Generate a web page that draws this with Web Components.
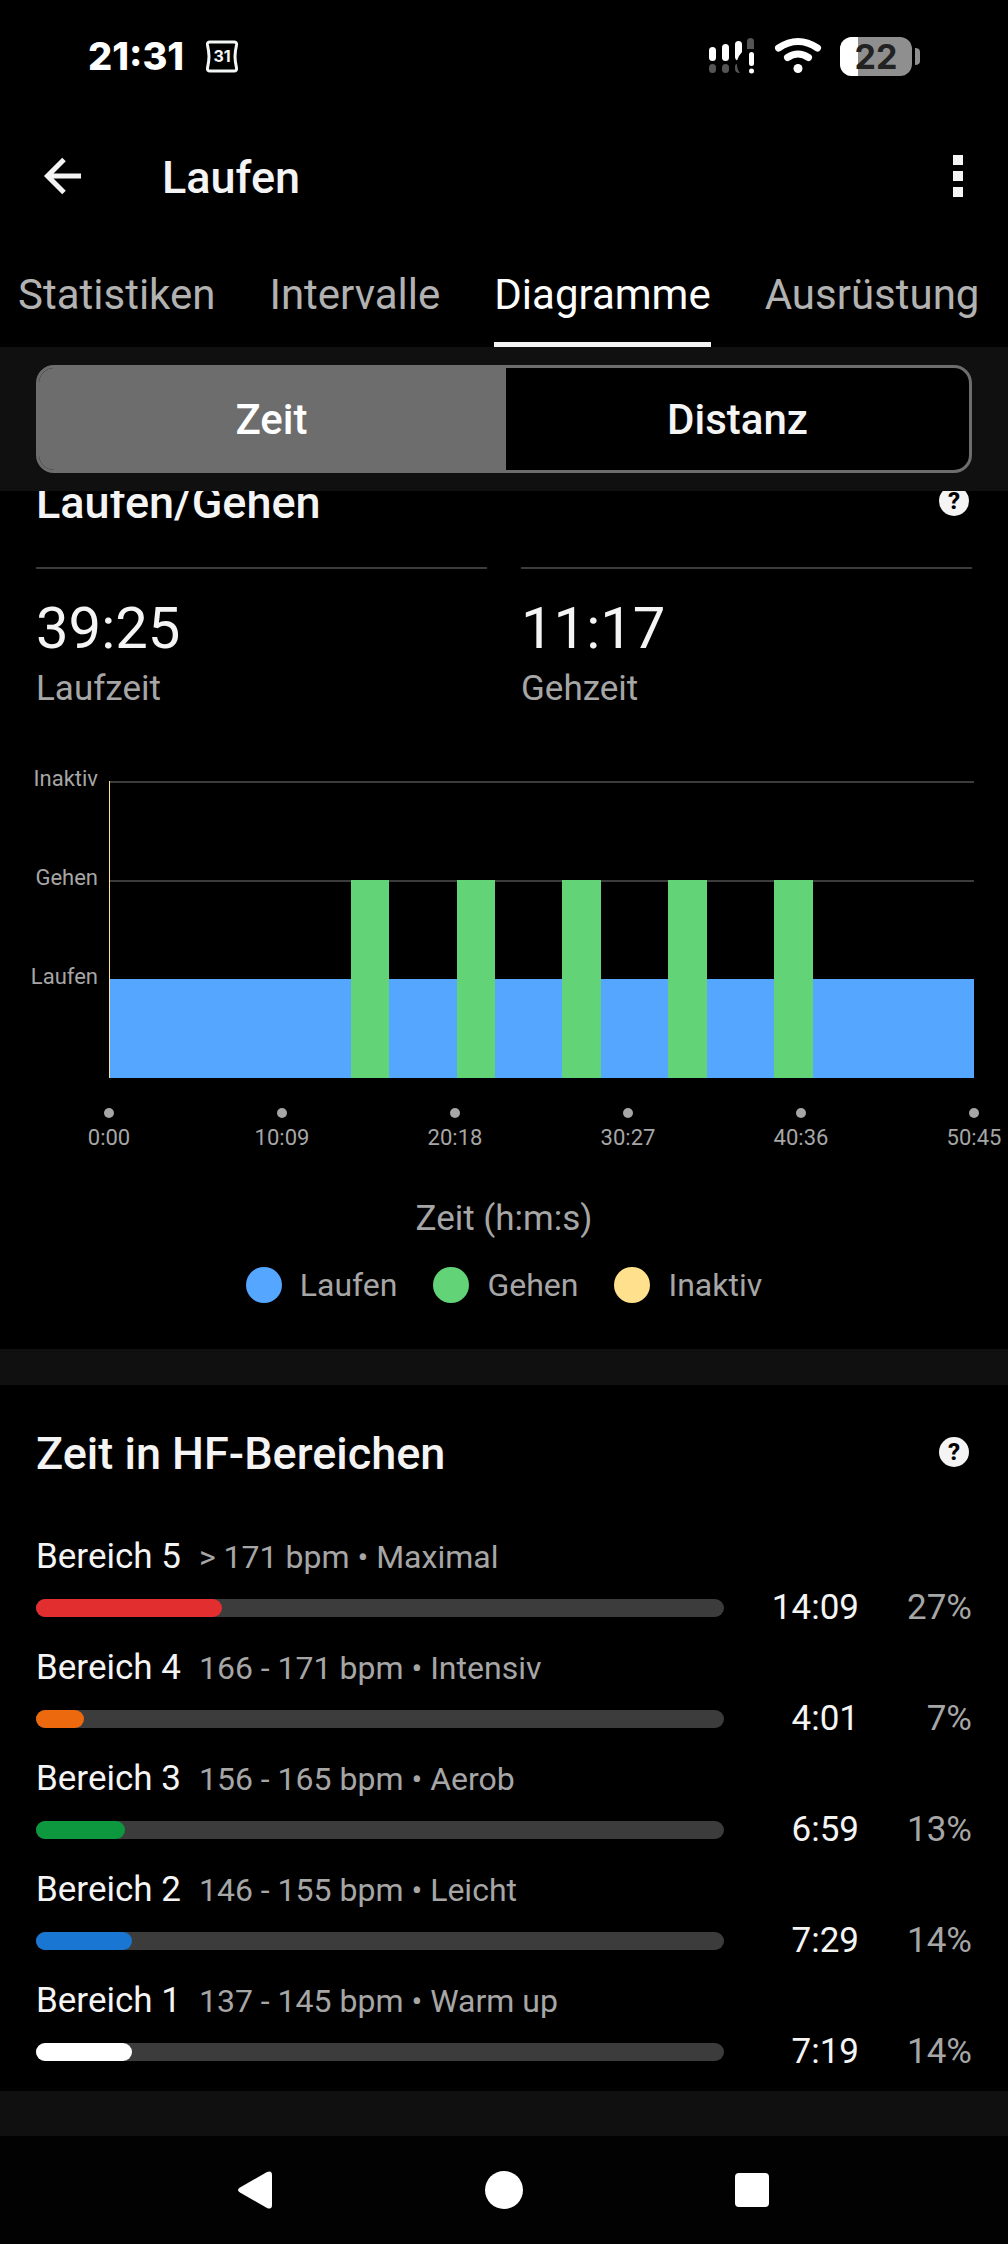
<!DOCTYPE html>
<html lang="de">
<head>
<meta charset="utf-8">
<meta name="viewport" content="width=device-width, initial-scale=1">
<title>Laufen</title>
<style>
  :root {
    --text: #f4f4f4;
    --muted: #a6a6a6;
    --line: #3c3c3c;
    --surface: #101010;
    --run: #54a6ff;
    --walk: #62d477;
    --idle: #ffe08c;
  }
  body {
    margin: 0;
    min-height: 100vh;
    display: flex;
    flex-direction: column;
    background: var(--surface);
    color: var(--text);
    font-family: Roboto, "Liberation Sans", sans-serif;
  }
  main {
    flex: 1;
    overflow: hidden;
    display: flex;
    flex-direction: column;
    gap: 36px;
  }
  /* the page is scrolled a little, so the first card starts under the switch */
  main metric-card:first-child {
    margin-top: -57px;
  }
  .stats {
    display: grid;
    grid-template-columns: 1fr 1fr;
    gap: 34px;
    padding: 0 36px;
  }
  .zones {
    padding: 16px 36px 2px;
  }
</style>
</head>
<body>
  <status-bar time="21:31" day="31" battery="22"></status-bar>
  <app-header>Laufen</app-header>
  <tab-bar>
    <tab-item>Statistiken</tab-item>
    <tab-item>Intervalle</tab-item>
    <tab-item active>Diagramme</tab-item>
    <tab-item>Ausrüstung</tab-item>
  </tab-bar>
  <segment-switch first="Zeit" second="Distanz"></segment-switch>
  <main>
    <metric-card>
      <span slot="title">Laufen/Gehen</span>
      <div class="stats">
        <stat-value label="Laufzeit">39:25</stat-value>
        <stat-value label="Gehzeit">11:17</stat-value>
      </div>
      <activity-chart></activity-chart>
    </metric-card>
    <metric-card>
      <span slot="title">Zeit in HF-Bereichen</span>
      <div class="zones">
        <zone-row name="Bereich 5" range="&gt; 171 bpm • Maximal" time="14:09" percent="27" color="#e22e2f"></zone-row>
        <zone-row name="Bereich 4" range="166 - 171 bpm • Intensiv" time="4:01" percent="7" color="#ec690d"></zone-row>
        <zone-row name="Bereich 3" range="156 - 165 bpm • Aerob" time="6:59" percent="13" color="#0d983f"></zone-row>
        <zone-row name="Bereich 2" range="146 - 155 bpm • Leicht" time="7:29" percent="14" color="#1976d2"></zone-row>
        <zone-row name="Bereich 1" range="137 - 145 bpm • Warm up" time="7:19" percent="14" color="#ffffff"></zone-row>
      </div>
    </metric-card>
  </main>
  <nav-bar></nav-bar>

<script>
const BUTTON_RESET = /* css */ `
  button {
    margin: 0;
    padding: 0;
    border: 0;
    background: none;
    color: inherit;
    font: inherit;
    cursor: pointer;
  }
  svg { display: block; }
`;

class StatusBar extends HTMLElement {
  connectedCallback () {
    const battery = this.getAttribute('battery');
    this.attachShadow({ mode: 'open' }).innerHTML = /* html */ `
      <style>
        :host {
          display: flex;
          align-items: center;
          height: 112px;
          padding: 0 88px;
          background: #000;
          color: #fff;
          font-family: Inter, Roboto, sans-serif;
        }
        svg { display: block; }
        .time {
          font-size: 38px;
          font-weight: 800;
          line-height: 48px;
        }
        .calendar { margin-left: 20px; }
        .icons {
          display: flex;
          align-items: center;
          gap: 18px;
          margin-left: auto;
        }
      </style>
      <span class="time">${this.getAttribute('time')}</span>
      <svg class="calendar" width="36" height="36" viewBox="0 0 36 36" aria-hidden="true">
        <path d="M6 4H30Q33 4 32.500 7Q31 14 31 18.500T32.500 30Q33 33 30 33H6Q3 33 3.500 30Q5 23 5 18.500T3.500 7Q3 4 6 4Z" fill="none" stroke="#f4f7f7" stroke-width="3"/>
        <text x="18" y="24" text-anchor="middle" font-size="16" font-weight="700" fill="#f4f7f7">${this.getAttribute('day')}</text>
      </svg>
      <div class="icons">
        <svg width="48" height="40" viewBox="0 0 48 40" aria-hidden="true">
          <g fill="#fff">
            <rect x="1" y="11" width="7" height="14" rx="3.500"/>
            <rect x="14" y="8" width="7" height="17" rx="3.500"/>
            <path d="M27 8.500a3.500 3.500 0 0 1 7 0V16Q31 19 29 24.500Q27 24 27 21Z"/>
            <rect x="41" y="16" width="5" height="14" rx="2.500"/>
            <circle cx="43.500" cy="35" r="2.500"/>
          </g>
          <g fill="#555">
            <rect x="1" y="28" width="7" height="9" rx="3.500"/>
            <rect x="14" y="28" width="7" height="9" rx="3.500"/>
            <path d="M27 31Q27 28 29 28Q29 34 32 37Q27 37 27 33Z"/>
            <path d="M39 13V5.500a3.500 3.500 0 0 1 7 0V13Z"/>
          </g>
        </svg>
        <svg width="48" height="40" viewBox="0 0 48 40" fill="none" stroke="#fff" stroke-width="7" stroke-linecap="round" aria-hidden="true">
          <path d="M4.500 12Q24 -1 43.500 12"/>
          <path d="M13.500 21.500Q24 14.500 34.500 21.500"/>
          <circle cx="24" cy="32.500" r="4.500" fill="#fff" stroke="none"/>
        </svg>
        <svg width="80" height="40" viewBox="0 0 80 40" role="img" aria-label="Akku ${battery} %">
          <clipPath id="body"><rect y="1" width="72" height="39" rx="12"/></clipPath>
          <g clip-path="url(#body)">
            <rect width="72" height="40" fill="#8f8f8f"/>
            <rect width="18" height="40" fill="#fff"/>
          </g>
          <path d="M75 12Q80 12 80 16V25Q80 29 75 29Z" fill="#8f8f8f"/>
          <text x="36" y="33" text-anchor="middle" font-size="34" font-weight="700" fill="#222">${battery}</text>
        </svg>
      </div>
    `;
  }
}

class AppHeader extends HTMLElement {
  connectedCallback () {
    this.attachShadow({ mode: 'open' }).innerHTML = /* html */ `
      <style>
        ${BUTTON_RESET}
        :host {
          display: flex;
          align-items: center;
          height: 128px;
          padding: 0 36px;
          background: #000;
        }
        h1 {
          flex: 1;
          margin: 0 0 0 72px;
          padding-top: 4px;
          font-size: 45px;
          font-weight: 500;
          line-height: 56px;
        }
      </style>
      <button aria-label="Zurück">
        <svg width="54" height="54" viewBox="0 0 54 54" fill="none" stroke="currentColor" stroke-width="5">
          <path d="M45 27H12M28 10.500L11.500 27L28 43.500"/>
        </svg>
      </button>
      <h1><slot></slot></h1>
      <button aria-label="Weitere Optionen">
        <svg width="28" height="54" viewBox="0 0 28 54" fill="currentColor">
          <path d="M9 6h10v10H9zM9 22h10v10H9zM9 38h10v10H9z"/>
        </svg>
      </button>
    `;
  }
}

class TabBar extends HTMLElement {
  connectedCallback () {
    this.attachShadow({ mode: 'open' }).innerHTML = /* html */ `
      <style>
        :host {
          display: flex;
          gap: 54px;
          height: 107px;
          padding: 0 18px;
          overflow: hidden;
          background: #000;
        }
      </style>
      <slot></slot>
    `;
    this.setAttribute('role', 'tablist');
  }
}

class TabItem extends HTMLElement {
  connectedCallback () {
    const active = this.hasAttribute('active');
    this.attachShadow({ mode: 'open' }).innerHTML = /* html */ `
      <style>
        ${BUTTON_RESET}
        :host {
          display: flex;
          flex: none;
        }
        button {
          padding-top: 8px;
          border-bottom: 5px solid transparent;
          color: #b2b2b2;
          font-size: 42px;
          line-height: 94px;
        }
        :host([active]) button {
          border-color: var(--text);
          color: #fff;
        }
      </style>
      <button role="tab" aria-selected="${active}"><slot></slot></button>
    `;
  }
}

class SegmentSwitch extends HTMLElement {
  connectedCallback () {
    this.attachShadow({ mode: 'open' }).innerHTML = /* html */ `
      <style>
        ${BUTTON_RESET}
        :host {
          display: block;
          padding: 18px 36px;
          background: var(--surface);
        }
        .switch {
          display: grid;
          grid-template-columns: 1fr 1fr;
          border: 3px solid #6d6d6d;
          border-radius: 18px;
          overflow: hidden;
          background: #000;
        }
        button {
          padding-top: 2px;
          font-size: 42px;
          font-weight: 500;
          line-height: 100px;
        }
        button + button {
          border-left: 2px solid #6d6d6d;
        }
        button[aria-pressed="true"] {
          background: #6d6d6d;
          color: #fff;
        }
      </style>
      <div class="switch">
        <button aria-pressed="true">${this.getAttribute('first')}</button>
        <button aria-pressed="false">${this.getAttribute('second')}</button>
      </div>
    `;
    const buttons = this.shadowRoot.querySelectorAll('button');
    buttons.forEach(button => button.addEventListener('click', () => {
      buttons.forEach(other => other.setAttribute('aria-pressed', other === button));
    }));
  }
}

class MetricCard extends HTMLElement {
  connectedCallback () {
    this.attachShadow({ mode: 'open' }).innerHTML = /* html */ `
      <style>
        ${BUTTON_RESET}
        :host {
          display: block;
          background: #000;
        }
        header {
          display: flex;
          align-items: center;
          justify-content: space-between;
          padding: 33px 39px 32px 36px;
        }
        h2 {
          margin: 0;
          padding-top: 4px;
          font-size: 45px;
          font-weight: 500;
          line-height: 64px;
        }
        button {
          width: 30px;
          height: 30px;
          border-radius: 50%;
          background: var(--text);
          color: #000;
          font-size: 24px;
          font-weight: 800;
          line-height: 30px;
        }
      </style>
      <header>
        <h2><slot name="title"></slot></h2>
        <button aria-label="Hilfe">?</button>
      </header>
      <slot></slot>
    `;
  }
}

class StatValue extends HTMLElement {
  connectedCallback () {
    this.attachShadow({ mode: 'open' }).innerHTML = /* html */ `
      <style>
        :host {
          display: flex;
          flex-direction: column;
          padding-top: 24px;
          border-top: 2px solid var(--line);
        }
        .value {
          font-size: 58px;
          line-height: 70px;
        }
        .label {
          color: var(--muted);
          font-size: 35px;
          line-height: 52px;
        }
      </style>
      <span class="value"><slot></slot></span>
      <span class="label">${this.getAttribute('label')}</span>
    `;
  }
}

// [kind, duration in seconds]
const SEGMENTS = [
  ['idle', 3], ['run', 847], ['walk', 137], ['run', 236], ['walk', 137],
  ['run', 235], ['walk', 137], ['run', 237], ['walk', 135], ['run', 238],
  ['walk', 137], ['run', 566],
];
const LEVELS = ['Inaktiv', 'Gehen', 'Laufen'];
const TICKS = ['0:00', '10:09', '20:18', '30:27', '40:36', '50:45'];
const LEGEND = [['run', 'Laufen'], ['walk', 'Gehen'], ['idle', 'Inaktiv']];

class ActivityChart extends HTMLElement {
  connectedCallback () {
    this.attachShadow({ mode: 'open' }).innerHTML = /* html */ `
      <style>
        :host {
          display: block;
          padding: 66px 34px 44px 0;
          color: var(--muted);
        }
        .plot {
          display: grid;
          grid-template-columns: 98px 1fr;
          column-gap: 11px;
        }
        .levels, .lines {
          display: grid;
          grid-auto-rows: 99px;
        }
        .levels {
          margin-top: -16px;
          text-align: right;
          font-size: 22px;
          line-height: 28px;
        }
        /* grid lines and bars share one cell */
        .area { display: grid; }
        .lines, .bars { grid-area: 1 / 1; }
        .lines div { border-top: 2px solid var(--line); }
        .bars {
          display: flex;
          align-items: flex-end;
          height: 297px;
        }
        .run { height: 33.33%; background: var(--run); }
        .walk { height: 66.66%; background: var(--walk); }
        .idle { height: 100%; min-width: 1px; background: var(--idle); }
        .ticks {
          display: flex;
          justify-content: space-between;
          margin: 30px 0 0 109px;
          font-size: 22px;
          line-height: 32px;
        }
        .ticks div {
          display: flex;
          flex-direction: column;
          align-items: center;
          gap: 4px;
          width: 0;
          white-space: nowrap;
        }
        .ticks div::before {
          content: "";
          width: 10px;
          height: 10px;
          border-radius: 50%;
          background: var(--muted);
        }
        .unit {
          margin: 39px 0 0 34px;
          text-align: center;
          font-size: 35px;
          line-height: 52px;
        }
        .legend {
          display: flex;
          justify-content: center;
          gap: 36px;
          margin: 20px 0 0 34px;
          font-size: 32px;
          line-height: 40px;
        }
        .legend span {
          display: flex;
          align-items: center;
          gap: 18px;
        }
        .legend i {
          width: 36px;
          height: 36px;
          border-radius: 50%;
        }
      </style>
      <div class="plot">
        <div class="levels">${LEVELS.map(level => `<div>${level}</div>`).join('')}</div>
        <div class="area">
          <div class="lines">${LEVELS.map(() => '<div></div>').join('')}</div>
          <div class="bars">${SEGMENTS.map(([kind, time]) => `<div class="${kind}" style="flex: ${time}"></div>`).join('')}</div>
        </div>
      </div>
      <div class="ticks">${TICKS.map(tick => `<div>${tick}</div>`).join('')}</div>
      <div class="unit">Zeit (h:m:s)</div>
      <div class="legend">${LEGEND.map(([kind, name]) => `<span><i class="${kind}"></i>${name}</span>`).join('')}</div>
    `;
  }
}

class ZoneRow extends HTMLElement {
  connectedCallback () {
    const percent = this.getAttribute('percent');
    const name = this.getAttribute('name');
    this.attachShadow({ mode: 'open' }).innerHTML = /* html */ `
      <style>
        :host {
          display: block;
          height: 111px;
          font-size: 35px;
        }
        .head {
          display: flex;
          align-items: baseline;
          gap: 18px;
          line-height: 46px;
        }
        .range {
          color: var(--muted);
          font-size: 32px;
        }
        .data {
          display: grid;
          grid-template-columns: 1fr 135px 113px;
          align-items: center;
          margin-top: 5px;
          line-height: 46px;
          text-align: right;
        }
        .track {
          height: 18px;
          border-radius: 9px;
          background: var(--line);
        }
        .fill {
          width: ${percent}%;
          height: 100%;
          border-radius: 9px;
          background: ${this.getAttribute('color')};
        }
        .percent { color: var(--muted); }
      </style>
      <div class="head">
        <span>${name}</span>
        <span class="range">${this.getAttribute('range')}</span>
      </div>
      <div class="data">
        <div class="track" role="meter" aria-label="${name}" aria-valuenow="${percent}"><div class="fill"></div></div>
        <span>${this.getAttribute('time')}</span>
        <span class="percent">${percent}%</span>
      </div>
    `;
  }
}

class NavBar extends HTMLElement {
  connectedCallback () {
    this.attachShadow({ mode: 'open' }).innerHTML = /* html */ `
      <style>
        ${BUTTON_RESET}
        :host {
          display: flex;
          align-items: center;
          justify-content: center;
          gap: 194px;
          height: 108px;
          background: #020202;
          color: #fff;
        }
      </style>
      <button aria-label="Zurück">
        <svg width="54" height="54" viewBox="0 0 54 54" fill="currentColor">
          <path d="M11 24.500L38 9Q43 7 43 12V42Q43 47 38 45L11 29.500Q7 27 11 24.500Z"/>
        </svg>
      </button>
      <button aria-label="Startbildschirm">
        <svg width="54" height="54" viewBox="0 0 54 54" fill="currentColor"><circle cx="27" cy="27" r="19"/></svg>
      </button>
      <button aria-label="Letzte Apps">
        <svg width="54" height="54" viewBox="0 0 54 54" fill="currentColor"><rect x="10" y="10" width="34" height="34" rx="4"/></svg>
      </button>
    `;
  }
}

customElements.define('status-bar', StatusBar);
customElements.define('app-header', AppHeader);
customElements.define('tab-bar', TabBar);
customElements.define('tab-item', TabItem);
customElements.define('segment-switch', SegmentSwitch);
customElements.define('metric-card', MetricCard);
customElements.define('stat-value', StatValue);
customElements.define('activity-chart', ActivityChart);
customElements.define('zone-row', ZoneRow);
customElements.define('nav-bar', NavBar);
</script>
</body>
</html>
